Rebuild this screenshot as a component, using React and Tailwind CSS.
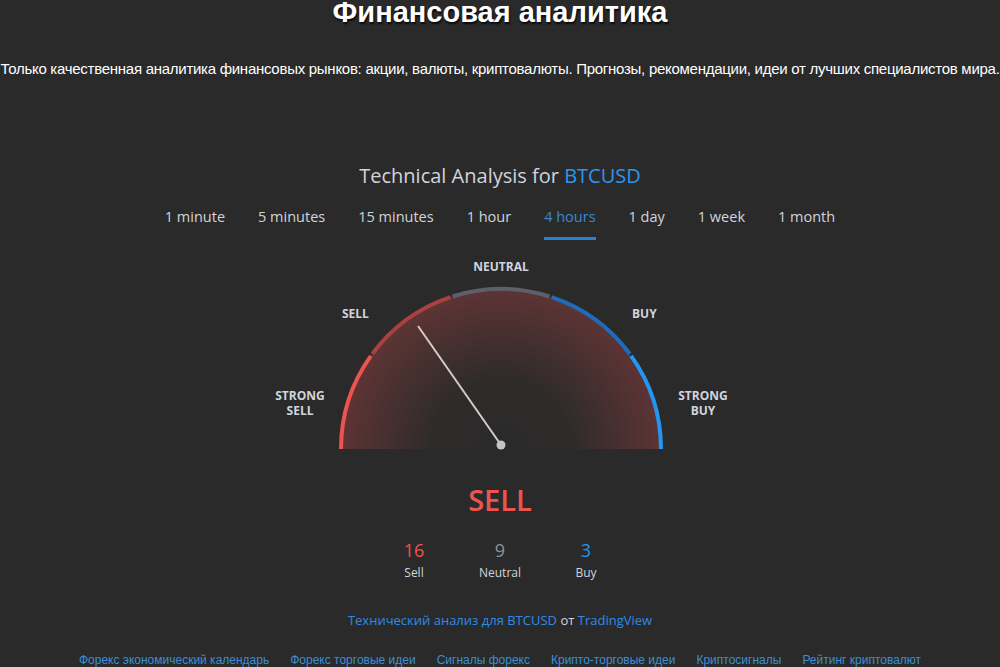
import React from "react";

const tabs = ["1 minute", "5 minutes", "15 minutes", "1 hour", "4 hours", "1 day", "1 week", "1 month"];

const footerLinks = [
  "Форекс экономический календарь",
  "Форекс торговые идеи",
  "Сигналы форекс",
  "Крипто-торговые идеи",
  "Криптосигналы",
  "Рейтинг криптовалют",
];

// gauge geometry (container coords)
const CX = 231;
const CY = 194;
const R = 160;

const pt = (deg) => {
  const a = (deg * Math.PI) / 180;
  return [CX + R * Math.cos(a), CY - R * Math.sin(a)];
};

const arc = (from, to) => {
  const [x1, y1] = pt(from);
  const [x2, y2] = pt(to);
  return `M ${x1.toFixed(2)} ${y1.toFixed(2)} A ${R} ${R} 0 0 1 ${x2.toFixed(2)} ${y2.toFixed(2)}`;
};

const segments = [
  { from: 180, to: 144.4, color: "#ef5350" },
  { from: 143.6, to: 108.4, color: "#a8413f" },
  { from: 107.6, to: 72.4, color: "#5d606b" },
  { from: 71.6, to: 36.4, color: "#1e6cbb" },
  { from: 35.6, to: 0, color: "#2196f3" },
];

function Gauge() {
  return (
    <div className="relative mx-auto h-[200px] w-[460px]">
      <svg width="460" height="200" className="absolute left-0 top-0">
        <defs>
          <radialGradient id="fill" cx={CX} cy={CY} r={R} gradientUnits="userSpaceOnUse">
            <stop offset="0" stopColor="#f05050" stopOpacity="0" />
            <stop offset="0.45" stopColor="#f05050" stopOpacity="0.03" />
            <stop offset="1" stopColor="#f05050" stopOpacity="0.26" />
          </radialGradient>
        </defs>
        <path d={`${arc(180, 0)} Z`} fill="url(#fill)" />
        {segments.map((s) => (
          <path key={s.from} d={arc(s.from, s.to)} stroke={s.color} strokeWidth="4" fill="none" />
        ))}
        <line x1={CX} y1={CY - 4} x2="148" y2="71" stroke="#cfcfc8" strokeWidth="2" />
        <circle cx={CX} cy={CY - 4} r="4.5" fill="#c4c4c4" />
      </svg>
      <div className="absolute left-[0px] top-[133px] w-[60px] text-center text-[12px] font-bold leading-[15px] text-[#d1d4dc]">
        STRONG
        <br />
        SELL
      </div>
      <div className="absolute left-[72px] top-[51px] text-[12px] font-bold leading-[15px] text-[#d1d4dc]">SELL</div>
      <div className="absolute left-[200px] top-[4px] w-[62px] text-center text-[12px] font-bold leading-[15px] text-[#d1d4dc]">
        NEUTRAL
      </div>
      <div className="absolute left-[362px] top-[51px] text-[12px] font-bold leading-[15px] text-[#d1d4dc]">BUY</div>
      <div className="absolute left-[403px] top-[133px] w-[60px] text-center text-[12px] font-bold leading-[15px] text-[#d1d4dc]">
        STRONG
        <br />
        BUY
      </div>
    </div>
  );
}

export default function App() {
  return (
    <div className="min-h-[667px] w-full overflow-hidden bg-[#2a2a2a]">
      <div className="font-['Liberation_Sans',Arial,sans-serif]">
        <h1 className="h-[24px] text-center text-[29px] font-bold leading-[24px] text-white [text-shadow:1px_2px_2px_rgba(0,0,0,0.8)]">
          Финансовая аналитика
        </h1>
        <p className="mt-[36px] h-[18px] whitespace-nowrap text-center text-[15px] leading-[18px] tracking-[-0.27px] text-white">
          Только качественная аналитика финансовых рынков: акции, валюты, криптовалюты. Прогнозы, рекомендации, идеи от лучших специалистов мира.
        </p>
      </div>

      <div className="font-['Open_Sans',sans-serif] text-[#d1d4dc]">
        <div className="mt-[86px] h-[24px] text-center text-[20px] leading-[24px]">
          Technical Analysis for <span className="text-[#2e96ee]">BTCUSD</span>
        </div>

        <div className="mt-[17px] flex h-[35px] justify-center gap-[33px]">
          {tabs.map((t) => (
            <div
              key={t}
              className={
                t === "4 hours"
                  ? "h-[35px] border-b-[3px] border-[#2a80d6] pt-[1px] text-[14.5px] leading-[22px] text-[#3a88d4]"
                  : "h-[35px] pt-[1px] text-[14.5px] leading-[22px] text-[#d1d4dc]"
              }
            >
              {t}
            </div>
          ))}
        </div>

        <div className="mt-[15px]">
          <Gauge />
        </div>

        <div className="mt-[29px] h-[32px] text-center text-[29px] font-semibold leading-[32px] text-[#ef5350]">
          SELL
        </div>

        <div className="mt-[24px] flex justify-center">
          {[
            { n: 16, label: "Sell", color: "text-[#ef5350]" },
            { n: 9, label: "Neutral", color: "text-[#8f929a]" },
            { n: 3, label: "Buy", color: "text-[#2196f3]" },
          ].map((c) => (
            <div key={c.label} className="flex w-[86px] flex-col items-center">
              <div className={`h-[20px] text-[18px] leading-[20px] ${c.color}`}>{c.n}</div>
              <div className="mt-[5px] h-[16px] text-[12px] leading-[16px] text-[#d1d4dc]">{c.label}</div>
            </div>
          ))}
        </div>

        <div className="mt-[31px] h-[16px] text-center text-[13px] leading-[16px]">
          <span className="text-[#2e8ae6]">Технический анализ для BTCUSD</span>{" "}
          <span className="text-[#d1d4dc]">от</span>{" "}
          <span className="text-[#2e8ae6]">TradingView</span>
        </div>
      </div>

      <div className="mt-[24px] flex h-[16px] justify-center gap-[21px] font-['Liberation_Sans',Arial,sans-serif] text-[12px] leading-[16px] text-[#3a8fd8]">
        {footerLinks.map((l) => (
          <span key={l}>{l}</span>
        ))}
      </div>
    </div>
  );
}
